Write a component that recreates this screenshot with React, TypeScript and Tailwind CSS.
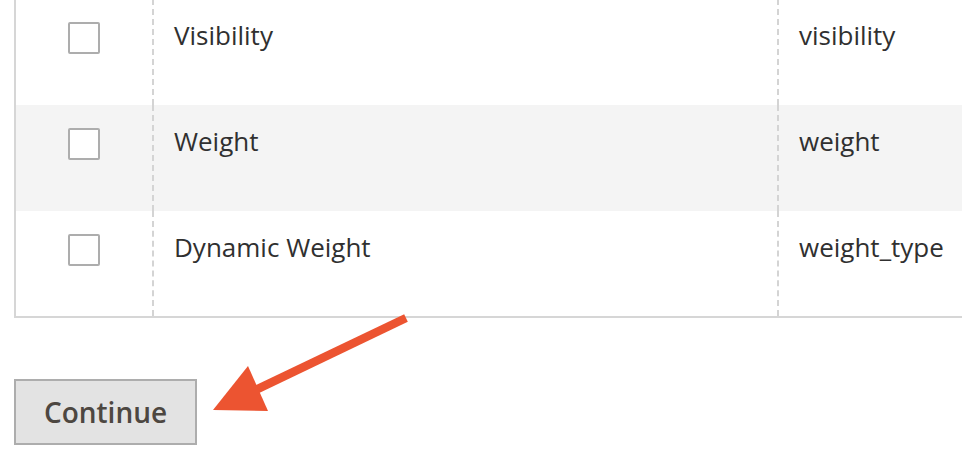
const rows = [
  { label: "Visibility", code: "visibility", striped: false },
  { label: "Weight", code: "weight", striped: true },
  { label: "Dynamic Weight", code: "weight_type", striped: false },
];

function Arrow() {
  return (
    <svg
      className="absolute inset-0 pointer-events-none"
      width="962"
      height="456"
      viewBox="0 0 962 456"
    >
      <line
        x1="406"
        y1="318"
        x2="245"
        y2="395"
        stroke="#ec5431"
        strokeWidth="8.5"
      />
      <polygon points="213,410 248,366 268,411" fill="#ec5431" />
    </svg>
  );
}

export default function App() {
  return (
    <div
      className="relative w-[962px] h-[456px] overflow-hidden bg-white text-[#303030]"
      style={{ fontFamily: '"Open Sans", "Liberation Sans", sans-serif' }}
    >
      <div className="pl-[14px] -mt-px">
        <div className="w-[1000px] border-l-2 border-b-2 border-[#d6d6d6]">
          {rows.map((r, i) => (
            <div
              key={r.code}
              className={`grid grid-cols-[138px_625px_1fr] ${
                i === 2 ? "h-[105px]" : "h-[106px]"
              } ${r.striped ? "bg-[#f4f4f4]" : "bg-white"}`}
            >
              <div className="flex justify-center pt-[23px] border-r-2 border-dashed border-[#d4d4d4]">
                <div className="w-[32px] h-[32px] rounded-[2px] border-2 border-[#adadad] bg-white" />
              </div>
              <div className="pl-[20px] pt-[18px] text-[26px] leading-[36px] border-r-2 border-dashed border-[#d4d4d4]">
                {r.label}
              </div>
              <div className="pl-[20px] pt-[18px] text-[26px] leading-[36px]">
                {r.code}
              </div>
            </div>
          ))}
        </div>
      </div>

      <div className="pl-[14px] pt-[61px]">
        <button className="w-[183px] h-[66px] flex items-center justify-center border-2 border-[#adadad] bg-[#e3e3e3] text-[28px] font-semibold text-[#4d4741]">
          Continue
        </button>
      </div>

      <Arrow />
    </div>
  );
}
